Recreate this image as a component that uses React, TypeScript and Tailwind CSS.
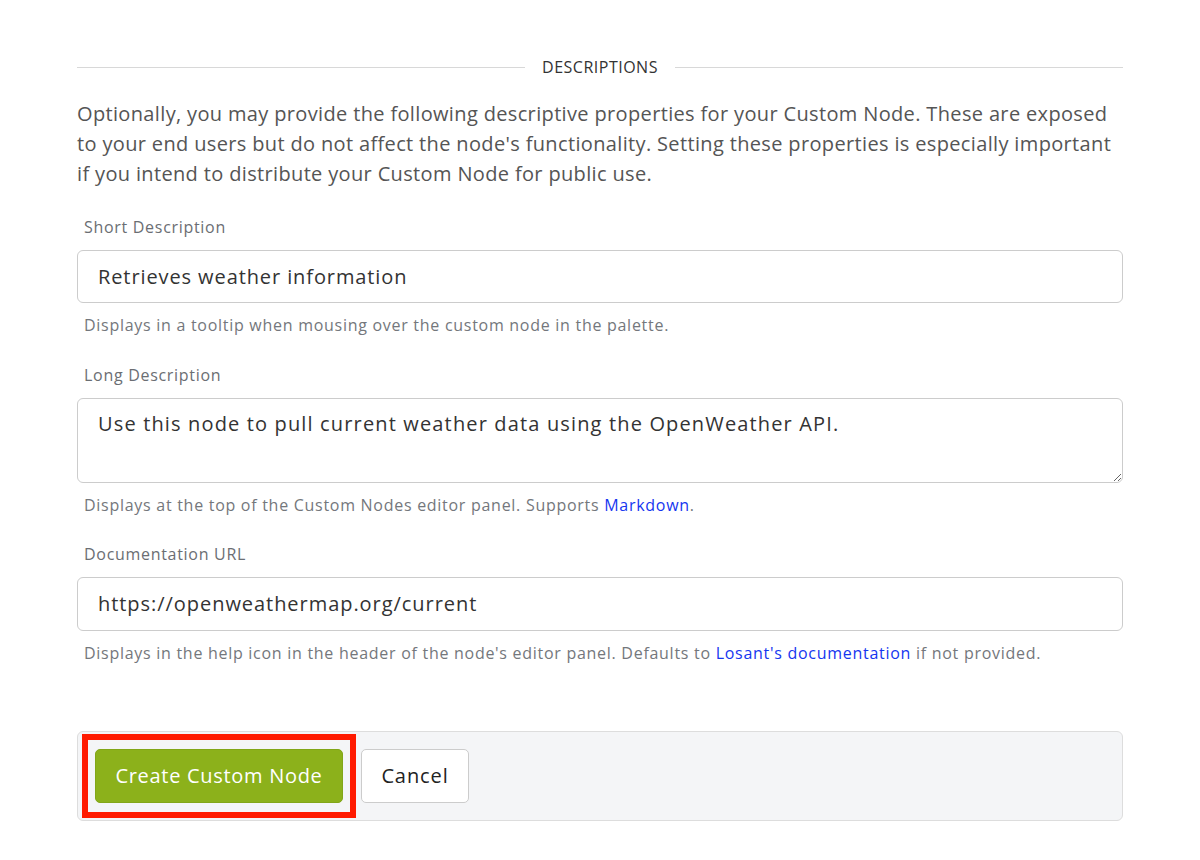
import React from "react";

const font = { fontFamily: "'Open Sans', 'Noto Sans', sans-serif" };

function Field({
  label,
  children,
  help,
  className = "",
}: {
  label: string;
  children: React.ReactNode;
  help: React.ReactNode;
  className?: string;
}) {
  return (
    <div className={className}>
      <div className="px-[7px] text-[16px] leading-[24px] tracking-[0.7px] text-[#6b6e73] mb-[11px]">{label}</div>
      {children}
      <div className="px-[7px] mt-[11px] text-[16px] leading-[22px] tracking-[0.72px] text-[#74777c]">{help}</div>
    </div>
  );
}

export default function App() {
  return (
    <div className="min-h-[860px] w-[1200px] bg-white" style={font}>
      <div className="mx-[77px] pt-[55px]">
        <div className="flex items-center gap-[17px] h-[24px]">
          <div className="flex-1 h-px bg-[#d8d8d8]" />
          <div className="text-[16px] tracking-[0.5px] text-[#333]">DESCRIPTIONS</div>
          <div className="flex-1 h-px bg-[#d8d8d8]" />
        </div>
        <p className="mt-[20px] text-[20px] leading-[30px] tracking-[0.35px] text-[#555]">
          Optionally, you may provide the following descriptive properties for your Custom Node. These are exposed to your end users but do not affect the node's functionality. Setting these properties is especially important if you intend to distribute your Custom Node for public use.
        </p>

        <Field
          className="mt-[26px]"
          label="Short Description"
          help="Displays in a tooltip when mousing over the custom node in the palette."
        >
          <input
            defaultValue="Retrieves weather information"
            className="block w-full h-[53px] rounded-[6px] border border-[#cccccc] px-[20px] pb-[1px] text-[20px] tracking-[0.9px] text-[#333] outline-none"
            style={font}
          />
        </Field>

        <Field
          className="mt-[27px]"
          label="Long Description"
          help={
            <>
              Displays at the top of the Custom Nodes editor panel. Supports{" "}
              <span className="text-[#1536f0]">Markdown</span>.
            </>
          }
        >
          <textarea
            defaultValue="Use this node to pull current weather data using the OpenWeather API."
            className="block w-full h-[85px] rounded-[6px] border border-[#cccccc] px-[20px] pt-[13px] text-[20px] leading-[24px] tracking-[1.15px] text-[#333] outline-none resize-y"
            style={font}
          />
        </Field>

        <Field
          className="mt-[26px]"
          label="Documentation URL"
          help={
            <>
              Displays in the help icon in the header of the node's editor panel. Defaults to{" "}
              <span className="text-[#1536f0]">Losant's documentation</span> if not provided.
            </>
          }
        >
          <input
            defaultValue="https://openweathermap.org/current"
            className="block w-full h-[54px] rounded-[6px] border border-[#cccccc] px-[20px] pb-[1px] text-[20px] tracking-[0.95px] text-[#333] outline-none"
            style={font}
          />
        </Field>

        <div className="mt-[67px] h-[90px] rounded-[6px] border border-[#dddddd] bg-[#f4f5f7] flex items-center px-[4px] gap-[5px]">
          <div className="border-[6px] border-[#ff1a00] px-[7px] py-[9px]">
            <button
              className="w-[248px] h-[54px] rounded-[5px] bg-[#8cb11b] border border-[#82a618] pb-[1px] text-white text-[20px] tracking-[0.7px]"
              style={font}
            >
              Create Custom Node
            </button>
          </div>
          <button
            className="w-[108px] h-[54px] rounded-[5px] bg-white border border-[#cccccc] pb-[1px] text-[#222] text-[20px] tracking-[0.9px]"
            style={font}
          >
            Cancel
          </button>
        </div>
      </div>
    </div>
  );
}
